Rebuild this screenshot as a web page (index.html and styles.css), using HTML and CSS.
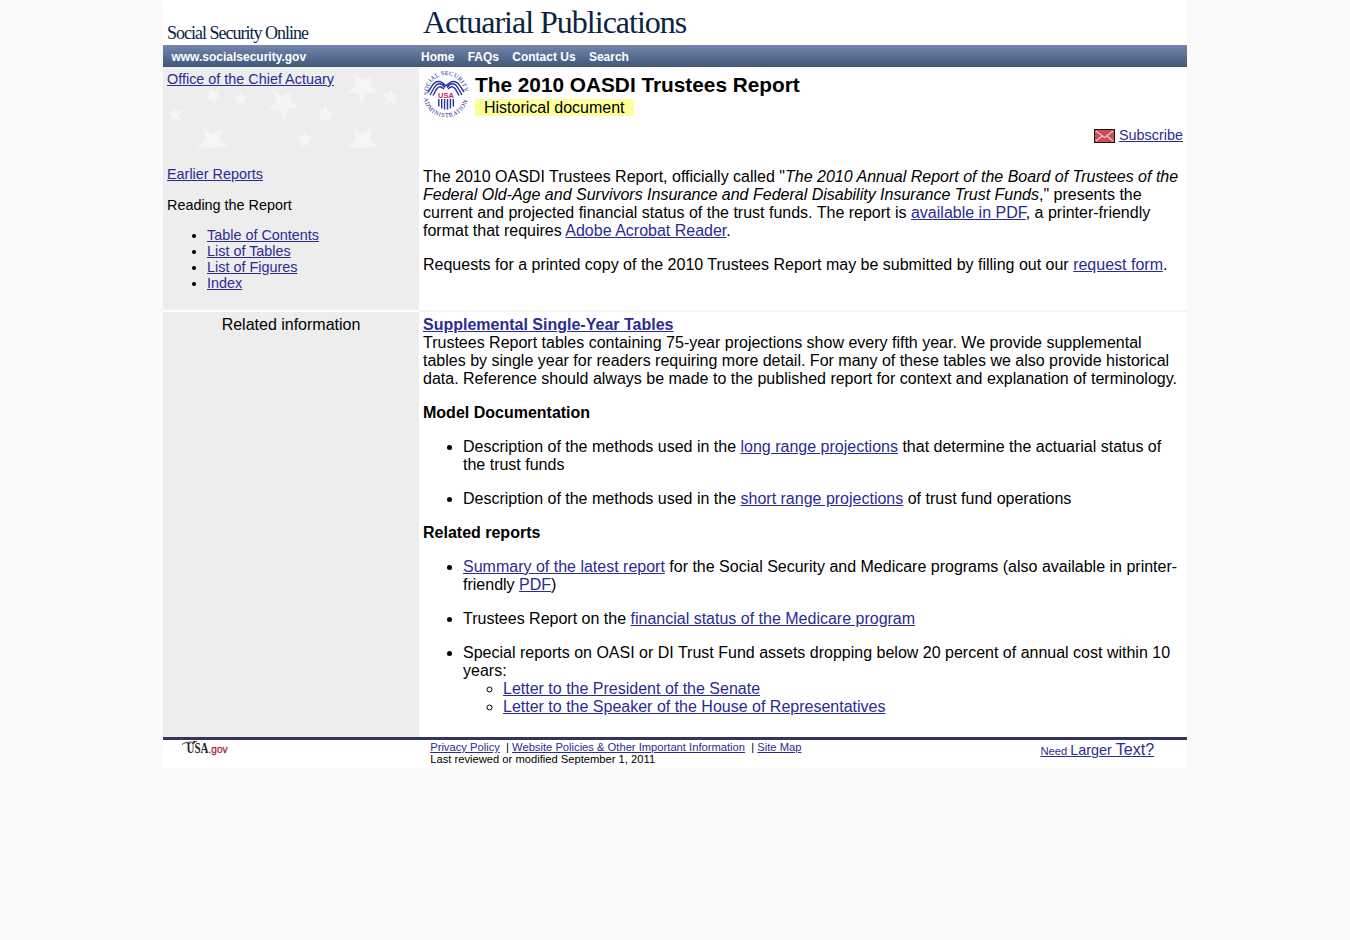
FILE: index.html
```html
<!DOCTYPE html>
<html lang="en">
<head>
<meta charset="utf-8">
<title>The 2010 OASDI Trustees Report</title>
<link rel="stylesheet" href="styles.css">
</head>
<body>
<div class="page">
  <header class="banner">
    <div class="site-name">Social Security Online</div>
    <div class="section-name">Actuarial Publications</div>
  </header>
  <nav class="nav">
    <div class="nav-site"><a href="#">www.socialsecurity.gov</a></div>
    <div class="nav-links"><a href="#">Home</a><a href="#">FAQs</a><a href="#">Contact Us</a><a href="#">Search</a></div>
  </nav>
  <div class="row row-intro">
    <aside class="side">
      <div class="side-top">
        <svg class="stars" width="252" height="81" viewBox="0 0 252 81" aria-hidden="true">
          <defs>
            <path id="star" d="M0-10 3-3.5 10-3 4.5 2 6.5 9.5 0 5.5-6.5 9.5-4.5 2-10-3-3-3.5Z"/>
          </defs>
          <g fill="#f5f5f5">
            <use href="#star" transform="translate(117 36) rotate(32) scale(1.5)"/>
            <use href="#star" transform="translate(196 20) rotate(38) scale(1.5)"/>
            <use href="#star" transform="translate(47 29) rotate(35) scale(.85)"/>
            <use href="#star" transform="translate(74 31) scale(.75)"/>
            <use href="#star" transform="translate(224 30) scale(.8)"/>
            <use href="#star" transform="translate(8 47) rotate(-4) scale(.8)"/>
            <use href="#star" transform="translate(158 47) rotate(2) scale(.85)"/>
            <use href="#star" transform="translate(138 72) rotate(-4) scale(.85)"/>
            <use href="#star" transform="translate(46 74) rotate(36) scale(1.5)"/>
            <use href="#star" transform="translate(196 74) rotate(36) scale(1.5)"/>
          </g>
        </svg>
        <a class="office" href="#">Office of the Chief Actuary</a>
      </div>
      <p><a href="#">Earlier Reports</a></p>
      <p>Reading the Report</p>
      <ul>
        <li><a href="#">Table of Contents</a></li>
        <li><a href="#">List of Tables</a></li>
        <li><a href="#">List of Figures</a></li>
        <li><a href="#">Index</a></li>
      </ul>
    </aside>
    <main class="main">
      <div class="title-row">
        <svg class="seal" width="46" height="48" viewBox="0 0 46 48" role="img" aria-label="Social Security Administration seal">
          <defs>
            <path id="arc-top" d="M5.1 25A18 18 0 1 1 40.9 25"/>
            <path id="arc-bottom" d="M.9 28A22.3 22.3 0 0 0 45.1 28"/>
          </defs>
          <g class="seal-text">
            <text><textPath href="#arc-top" textLength="57">SOCIAL SECURITY</textPath></text>
            <text><textPath href="#arc-bottom" textLength="61">ADMINISTRATION</textPath></text>
          </g>
          <g fill="none" stroke="#2632a4" stroke-width="1.4">
            <path d="M23 16C17 9 12 11 9 16L5 22M22 17.5C18 12 14 13 11 18L7 25M21 19C17 15 15 17 13 20L10 25.5"/>
            <path d="M23 16C29 9 34 11 37 16L41 22M24 17.5C28 12 32 13 35 18L39 25M25 19C29 15 31 17 33 20L36 25.5"/>
            <path d="M15.8 29V36.5M18.7 29V38.5M21.6 29V39.5M24.5 29V39.5M27.4 29V38.5M30.3 29V36.5"/>
          </g>
          <text class="seal-usa" x="23" y="27.5" text-anchor="middle" textLength="16">USA</text>
        </svg>
        <div>
          <h1>The 2010 OASDI Trustees Report</h1>
          <span class="historical">Historical document</span>
        </div>
      </div>
      <div class="subscribe">
        <svg width="21" height="14" viewBox="0 0 21 14" aria-hidden="true">
          <rect x=".5" y=".5" width="20" height="13" fill="#c8505a" stroke="#201014"/>
          <path d="M2 2 10.5 8.5 19 2M2 12 8 7M19 12 13 7" fill="none" stroke="#f3c9cc" stroke-width="1.1"/>
        </svg>
        <a href="#">Subscribe</a>
      </div>
      <p>The 2010 OASDI Trustees Report, officially called "<i>The 2010 Annual Report of the Board of Trustees of the Federal Old-Age and Survivors Insurance and Federal Disability Insurance Trust Funds</i>," presents the current and projected financial status of the trust funds. The report is <a href="#">available in PDF</a>, a printer-friendly format that requires <a href="#">Adobe Acrobat Reader</a>.</p>
      <p>Requests for a printed copy of the 2010 Trustees Report may be submitted by filling out our <a href="#">request form</a>.</p>
    </main>
  </div>
  <div class="row row-related">
    <aside class="side related-label">Related information</aside>
    <section class="main related">
      <div><a class="strong" href="#">Supplemental Single-Year Tables</a></div>
      <div>Trustees Report tables containing 75-year projections show every fifth year. We provide supplemental tables by single year for readers requiring more detail. For many of these tables we also provide historical data. Reference should always be made to the published report for context and explanation of terminology.</div>
      <h2>Model Documentation</h2>
      <ul>
        <li>Description of the methods used in the <a href="#">long range projections</a> that determine the actuarial status of the trust funds</li>
        <li>Description of the methods used in the <a href="#">short range projections</a> of trust fund operations</li>
      </ul>
      <h2>Related reports</h2>
      <ul>
        <li><a href="#">Summary of the latest report</a> for the Social Security and Medicare programs (also available in printer-friendly <a href="#">PDF</a>)</li>
        <li>Trustees Report on the <a href="#">financial status of the Medicare program</a></li>
        <li>Special reports on OASI or DI Trust Fund assets dropping below 20 percent of annual cost within 10 years:
          <ul class="letters">
            <li><a href="#">Letter to the President of the Senate</a></li>
            <li><a href="#">Letter to the Speaker of the House of Representatives</a></li>
          </ul>
        </li>
      </ul>
    </section>
  </div>
  <footer class="footer">
    <div class="usa">
      <svg width="50" height="18" viewBox="0 0 50 18" role="img" aria-label="USA.gov">
        <path d="M1 4.5C5 1.5 9 2 14 2.6M12 1.2 16 1.8" fill="none" stroke="#34343e" stroke-width="1"/>
        <text class="usa-text" x="5.5" y="13" textLength="22" lengthAdjust="spacingAndGlyphs">USA</text>
        <text class="gov-text" x="27.5" y="13" textLength="19" lengthAdjust="spacingAndGlyphs">.gov</text>
      </svg>
    </div>
    <div class="policies">
      <div><a href="#">Privacy Policy</a>&nbsp; | <a href="#">Website Policies &amp; Other Important Information</a>&nbsp; | <a href="#">Site Map</a></div>
      <div>Last reviewed or modified September 1, 2011</div>
    </div>
    <a class="larger" href="#">Need <span>Larger </span><span>Text?</span></a>
  </footer>
</div>
</body>
</html>
```
FILE: styles.css
```css
* { box-sizing: border-box; }
body {
  margin: 0;
  background: #fafafa;
  color: #000;
  font: 16px/18px "Liberation Sans", Arial, sans-serif;
}
a { color: #2b2b94; }
.page { width: 1024px; margin: 0 auto; background: #fff; }
.banner, .nav, .row { display: grid; grid-template-columns: 256px 768px; }
.banner {
  height: 45px;
  color: #0b2440;
  font-family: "Liberation Serif", "Times New Roman", serif;
  letter-spacing: -1px;
}
.site-name { padding: 22px 0 0 4px; font-size: 18px; line-height: 22px; }
.section-name { padding: 4px 0 0 4px; font-size: 32px; line-height: 37px; }
.nav {
  height: 22px;
  background: linear-gradient(#7486ae, #405878);
  font-size: 12px;
  line-height: 24px;
  font-weight: bold;
}
.nav a { color: #fff; text-decoration: none; }
.nav-site { padding-left: 8.4px; }
.nav-links { display: flex; gap: 13.3px; padding-left: 2px; }
.side { background: #ededed; padding: 4px; font-size: 14.4px; line-height: 16px; }
.main { padding: 4px; }
.row-intro { height: 243px; }
.side-top { position: relative; height: 95px; }
.stars { position: absolute; left: 0; top: -4px; }
.office { position: relative; }
.side p { margin: 0 0 15px; }
.side ul { margin: -1px 0 0; padding-left: 40px; }
.title-row { display: flex; gap: 6px; height: 56px; }
.seal { margin-top: -1px; overflow: visible; }
.seal-text { font: 6.2px "Liberation Serif", serif; fill: #24248c; }
.seal-usa { font: bold 7.5px "Liberation Sans", sans-serif; fill: #d4204c; }
h1 { margin: 2px 0 0; font-size: 20.8px; line-height: 24px; }
.historical { display: inline-block; margin-top: 2px; padding: 0 9px; background: #ffff99; line-height: 18px; height: 17px; }
.subscribe {
  display: flex;
  justify-content: flex-end;
  gap: 4px;
  height: 41px;
  font-size: 14.4px;
  line-height: 16px;
}
.subscribe svg { margin-top: 2px; }
.main p { margin: 0 0 16px; }
.row-related { margin-top: 2px; height: 425px; }
.related-label { text-align: center; font-size: 16px; line-height: 18px; }
.related { box-shadow: 0 -2px #f4f4f4; }
.strong { font-weight: bold; }
h2 { margin: 16px 0; font-size: 16px; line-height: 18px; }
.related ul { margin: 0; padding-left: 40px; }
.related > ul > li + li { margin-top: 16px; }
.footer {
  display: grid;
  grid-template-columns: 267px 1fr 147px;
  height: 31px;
  border-top: 3px solid #34345f;
  font-size: 11.2px;
  line-height: 12px;
}
.usa { padding-left: 18px; }
.usa-text { font: bold 14px "Liberation Serif", serif; fill: #24242e; }
.gov-text { font: 11.5px "Liberation Sans", sans-serif; fill: #a51c40; stroke: #a51c40; stroke-width: .3px; }
.policies { padding: 1px 0 0 .2px; }
.larger { padding: 1px 0 0 .4px; line-height: 18px; white-space: nowrap; }
.larger span:first-of-type { font-size: 14.4px; }
.larger span:last-of-type { font-size: 16px; }
```
